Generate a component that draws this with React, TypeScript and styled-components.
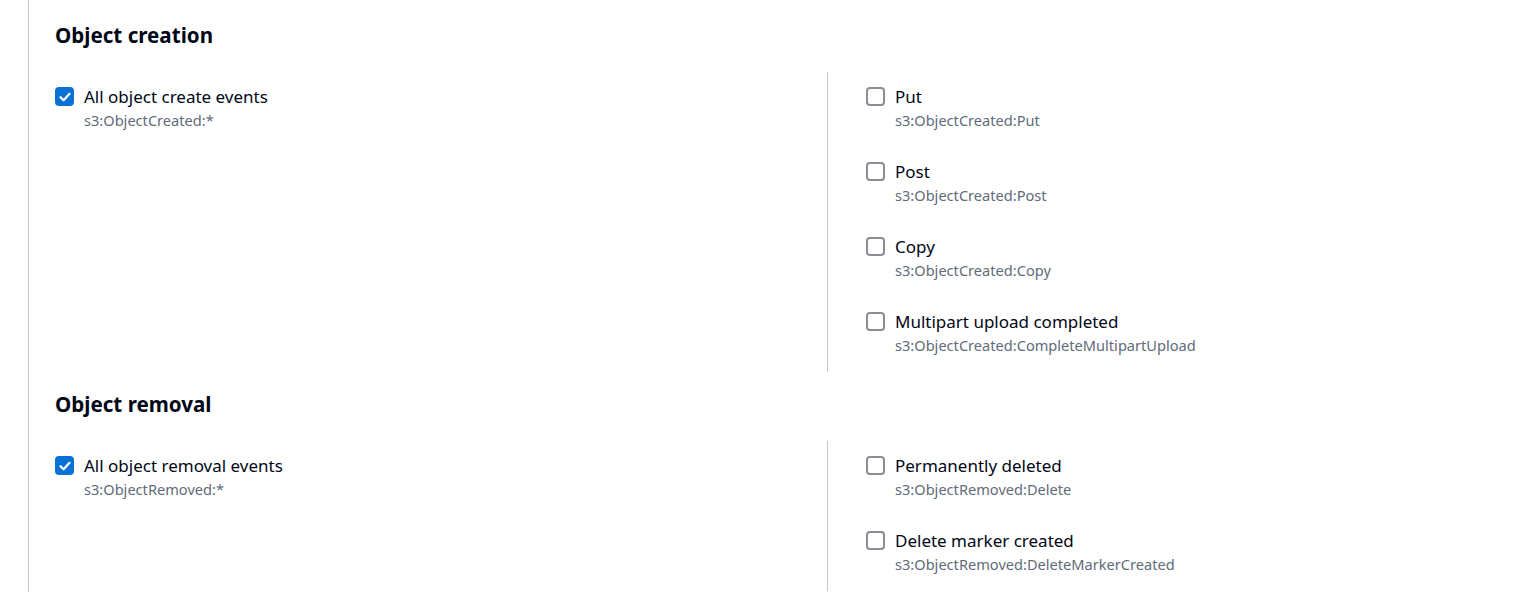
import React from "react";
import styled, { createGlobalStyle } from "styled-components";

const GlobalStyle = createGlobalStyle`
  html, body { margin: 0; padding: 0; background: #ffffff; }
  body { font-family: "Noto Sans", "Open Sans", Arial, sans-serif; color: #000716; }
`;

const Page = styled.div`
  padding-left: 28px;
  height: 592px;
  overflow: hidden;
`;

const Panel = styled.div`
  border-left: 1px solid #c6c6cd;
  padding: 23px 0 0 26px;
  display: flex;
  flex-direction: column;
  gap: 20px;
  min-height: 600px;
`;

const Section = styled.section`
  display: flex;
  flex-direction: column;
  gap: 25px;
`;

const Heading = styled.h2`
  margin: 0;
  font-size: 20.6px;
  line-height: 24px;
  font-weight: 700;
  color: #000716;
`;

const Grid = styled.div`
  display: grid;
  grid-template-columns: 772px 1fr;
`;

const Column = styled.div<{ $divider?: boolean }>`
  display: flex;
  flex-direction: column;
  gap: 29px;
  padding: 13px 0 16px ${(p) => (p.$divider ? "38px" : "0")};
  border-left: ${(p) => (p.$divider ? "1px solid #c6c6cd" : "none")};
`;

const Option = styled.label`
  display: flex;
  align-items: flex-start;
  gap: 10px;
  cursor: pointer;
`;

const Box = styled.span<{ $checked: boolean }>`
  flex: none;
  width: 19px;
  height: 19px;
  margin-top: 2px;
  box-sizing: border-box;
  border-radius: 4px;
  border: 2px solid ${(p) => (p.$checked ? "#0972d3" : "#8c8c94")};
  background: ${(p) => (p.$checked ? "#0972d3" : "#ffffff")};
  display: flex;
  align-items: center;
  justify-content: center;
`;

const Texts = styled.span`
  display: flex;
  flex-direction: column;
`;

const Label = styled.span`
  font-size: 17px;
  line-height: 24px;
  color: #000716;
`;

const Description = styled.span`
  font-size: 14.6px;
  line-height: 22px;
  color: #5f6b7a;
`;

type Item = { label: string; desc: string; checked?: boolean };

const CheckItem = ({ label, desc, checked = false }: Item) => (
  <Option>
    <Box $checked={checked}>
      {checked && (
        <svg width="12" height="10" viewBox="0 0 12 10" fill="none">
          <path d="M1.5 5.2 L4.6 8.2 L10.5 1.8" stroke="#ffffff" strokeWidth="2.2" strokeLinecap="round" strokeLinejoin="round" />
        </svg>
      )}
    </Box>
    <Texts>
      <Label>{label}</Label>
      <Description>{desc}</Description>
    </Texts>
  </Option>
);

const sections: { title: string; all: Item; items: Item[] }[] = [
  {
    title: "Object creation",
    all: { label: "All object create events", desc: "s3:ObjectCreated:*", checked: true },
    items: [
      { label: "Put", desc: "s3:ObjectCreated:Put" },
      { label: "Post", desc: "s3:ObjectCreated:Post" },
      { label: "Copy", desc: "s3:ObjectCreated:Copy" },
      { label: "Multipart upload completed", desc: "s3:ObjectCreated:CompleteMultipartUpload" },
    ],
  },
  {
    title: "Object removal",
    all: { label: "All object removal events", desc: "s3:ObjectRemoved:*", checked: true },
    items: [
      { label: "Permanently deleted", desc: "s3:ObjectRemoved:Delete" },
      { label: "Delete marker created", desc: "s3:ObjectRemoved:DeleteMarkerCreated" },
    ],
  },
];

export default function App() {
  return (
    <>
      <GlobalStyle />
      <Page>
        <Panel>
          {sections.map((s) => (
            <Section key={s.title}>
              <Heading>{s.title}</Heading>
              <Grid>
                <Column>
                  <CheckItem {...s.all} />
                </Column>
                <Column $divider>
                  {s.items.map((it) => (
                    <CheckItem key={it.desc} {...it} />
                  ))}
                </Column>
              </Grid>
            </Section>
          ))}
        </Panel>
      </Page>
    </>
  );
}
